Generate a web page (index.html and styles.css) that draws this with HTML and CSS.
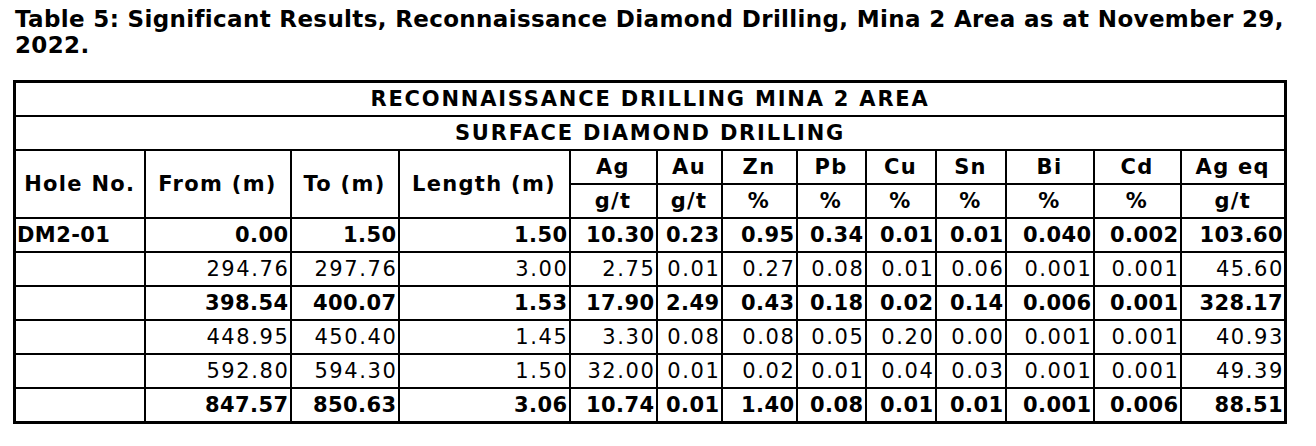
FILE: index.html
```html
<!DOCTYPE html>
<html>
<head>
<meta charset="utf-8">
<link rel="stylesheet" href="styles.css">
</head>
<body>
<div class="page">
  <h1 class="title">Table 5: Significant Results, Reconnaissance Diamond Drilling, Mina 2 Area as at November 29, 2022.</h1>
  <table class="results">
    <colgroup>
      <col style="width:130px"><col style="width:146px"><col style="width:108px"><col style="width:171px">
      <col style="width:87px"><col style="width:65px"><col style="width:75px"><col style="width:69px">
      <col style="width:70px"><col style="width:70px"><col style="width:88px"><col style="width:87px"><col style="width:105px">
    </colgroup>
    <thead>
      <tr><th colspan="13" class="banner">RECONNAISSANCE DRILLING MINA 2 AREA</th></tr>
      <tr><th colspan="13" class="banner">SURFACE DIAMOND DRILLING</th></tr>
      <tr>
        <th rowspan="2">Hole No.</th><th rowspan="2">From (m)</th><th rowspan="2">To (m)</th><th rowspan="2">Length (m)</th>
        <th>Ag</th><th>Au</th><th>Zn</th><th>Pb</th><th>Cu</th><th>Sn</th><th>Bi</th><th>Cd</th><th>Ag eq</th>
      </tr>
      <tr class="units">
        <th>g/t</th><th>g/t</th><th>%</th><th>%</th><th>%</th><th>%</th><th>%</th><th>%</th><th>g/t</th>
      </tr>
    </thead>
    <tbody>
      <tr class="bold"><td class="hole">DM2-01</td><td>0.00</td><td>1.50</td><td>1.50</td><td>10.30</td><td>0.23</td><td>0.95</td><td>0.34</td><td>0.01</td><td>0.01</td><td>0.040</td><td>0.002</td><td>103.60</td></tr>
      <tr><td class="hole"></td><td>294.76</td><td>297.76</td><td>3.00</td><td>2.75</td><td>0.01</td><td>0.27</td><td>0.08</td><td>0.01</td><td>0.06</td><td>0.001</td><td>0.001</td><td>45.60</td></tr>
      <tr class="bold"><td class="hole"></td><td>398.54</td><td>400.07</td><td>1.53</td><td>17.90</td><td>2.49</td><td>0.43</td><td>0.18</td><td>0.02</td><td>0.14</td><td>0.006</td><td>0.001</td><td>328.17</td></tr>
      <tr><td class="hole"></td><td>448.95</td><td>450.40</td><td>1.45</td><td>3.30</td><td>0.08</td><td>0.08</td><td>0.05</td><td>0.20</td><td>0.00</td><td>0.001</td><td>0.001</td><td>40.93</td></tr>
      <tr><td class="hole"></td><td>592.80</td><td>594.30</td><td>1.50</td><td>32.00</td><td>0.01</td><td>0.02</td><td>0.01</td><td>0.04</td><td>0.03</td><td>0.001</td><td>0.001</td><td>49.39</td></tr>
      <tr class="bold"><td class="hole"></td><td>847.57</td><td>850.63</td><td>3.06</td><td>10.74</td><td>0.01</td><td>1.40</td><td>0.08</td><td>0.01</td><td>0.01</td><td>0.001</td><td>0.006</td><td>88.51</td></tr>
    </tbody>
  </table>
</div>
</body>
</html>
```
FILE: styles.css
```css
html, body {
  margin: 0;
  padding: 0;
  background: #ffffff;
}
.page {
  padding: 6px 0 0 13px;
  font-family: "DejaVu Sans", Verdana, sans-serif;
  color: #000;
}
.title {
  margin: 0 0 0 2px;
  width: 1298px;
  font-size: 23px;
  line-height: 26px;
  font-weight: bold;
  letter-spacing: 0.35px;
}
.results {
  margin-top: 22px;
  border-collapse: collapse;
  table-layout: fixed;
  width: 1271px;
  border: 3px solid #000;
  font-size: 21px;
}
.results th,
.results td {
  border: 2px solid #000;
  padding: 0 1px 0 1px;
  height: 32px;
  line-height: 22px;
  white-space: nowrap;
  overflow: hidden;
}
.results th {
  font-weight: bold;
  text-align: center;
  letter-spacing: 1.3px;
}
.results th.banner {
  letter-spacing: 1.8px;
}
.results td {
  text-align: right;
  font-weight: normal;
  letter-spacing: 1.6px;
  padding-right: 0;
}
.results tr.bold td {
  font-weight: bold;
  letter-spacing: 0.4px;
  padding-right: 1px;
}
.results td.hole {
  text-align: left;
  letter-spacing: 0.6px;
}
```
